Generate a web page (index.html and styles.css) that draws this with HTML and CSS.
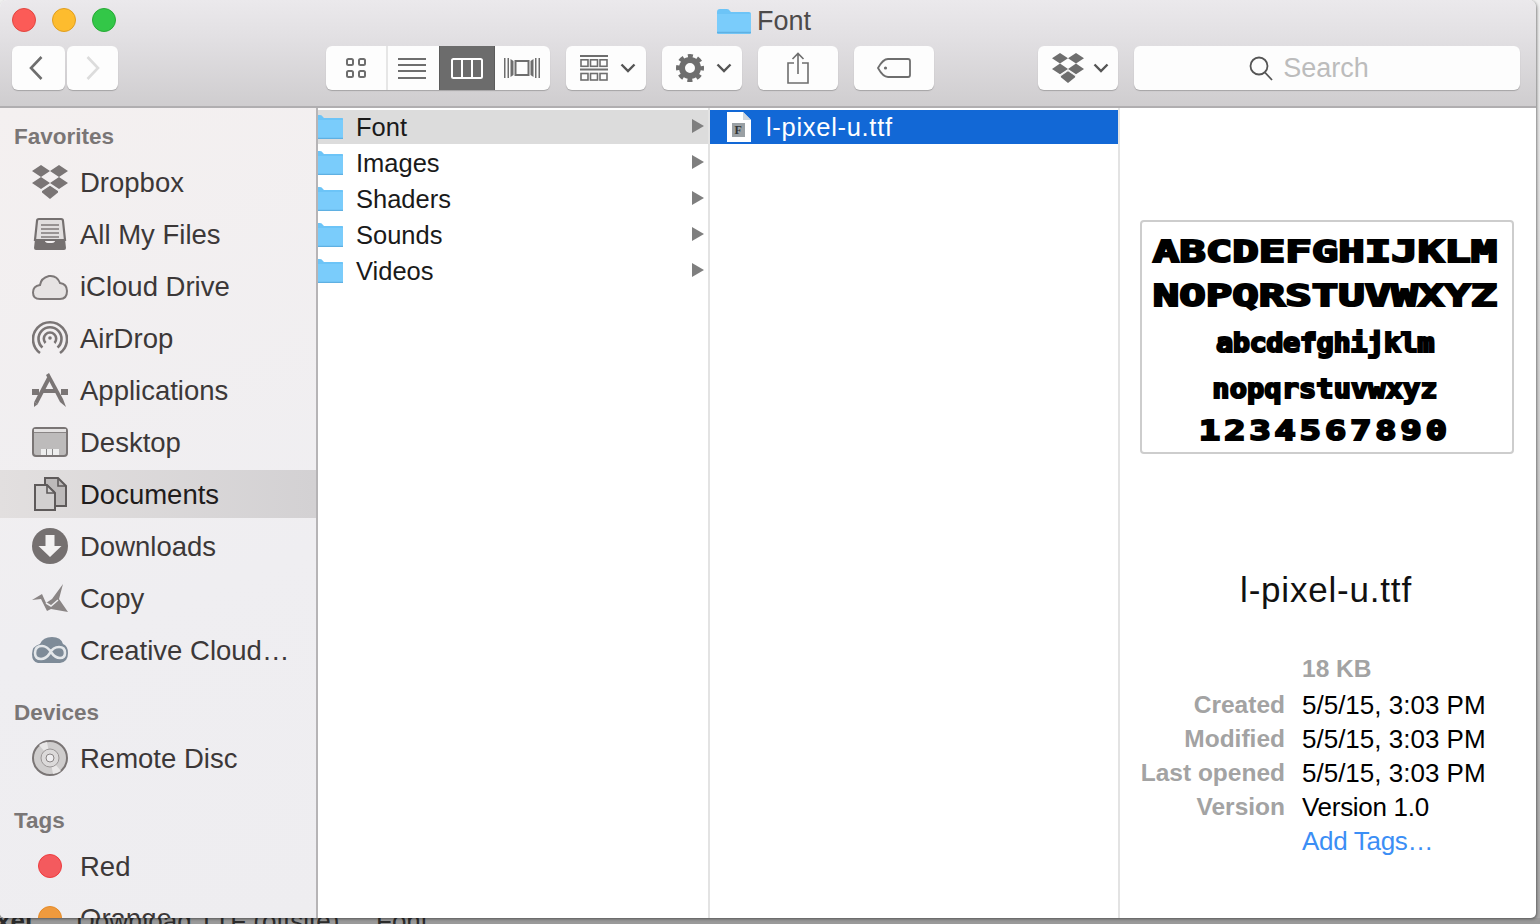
FILE: index.html
```html
<!doctype html>
<html lang="en">
<head>
    <meta charset="UTF-8">
    <title>Font</title>
    <link rel="stylesheet" href="styles.css">
</head>
<body>
    <svg class="defs" width="0" height="0">
        <symbol id="folder" viewBox="0 0 34 25">
            <path d="M0 3q0-3 3-3h7q2 0 3 2l1 1h18q2 0 2 2v18q0 2-2 2H2q-2 0-2-2z" fill="#6cc4f7"/>
            <path d="M0 5h34v18q0 2-2 2H2q-2 0-2-2z" fill="#7accfb"/>
            <path d="M0 23.500h34" stroke="#5fb0e2" stroke-width="1.500"/>
        </symbol>
        <symbol id="dropbox" viewBox="0 0 36 34">
            <path d="M9 0l9 6-9 6-9-6zM27 0l9 6-9 6-9-6zM9 12l9 6-9 6-9-6zM27 12l9 6-9 6-9-6z"/>
            <path d="M18 20l8 5.500v2L18 34l-8-6.500v-2z"/>
            <path d="M9 26l9-6 9 6" fill="none" stroke="#eee" stroke-width="1.200"/>
        </symbol>
        <symbol id="chevron" viewBox="0 0 16 10">
            <path d="M1.500 1.500L8 8l6.500-6.500" fill="none" stroke="#555" stroke-width="2.400"/>
        </symbol>
        <symbol id="triangle" viewBox="0 0 12 14">
            <path d="M0 0l12 7-12 7z" fill="#7f7f7f"/>
        </symbol>
    </svg>

    <div class="window">
        <header class="titlebar">
            <div class="title-row">
                <div class="lights">
                    <span class="light red"></span>
                    <span class="light yellow"></span>
                    <span class="light green"></span>
                </div>
                <div class="title">
                    <svg class="title-folder"><use href="#folder"/></svg>
                    <span>Font</span>
                </div>
                <div></div>
            </div>
            <div class="toolbar">
                <div class="nav">
                    <button class="btn btn-back">
                        <svg width="16" height="26" viewBox="0 0 16 26"><path d="M13.500 2L3 13l10.500 11" fill="none" stroke="#6e6e6e" stroke-width="2.600"/></svg>
                    </button>
                    <button class="btn btn-fwd">
                        <svg width="16" height="26" viewBox="0 0 16 26"><path d="M2.500 2L13 13 2.500 24" fill="none" stroke="#dcdcdc" stroke-width="2.600"/></svg>
                    </button>
                </div>
                <div class="views">
                    <button class="view view-icons">
                        <svg width="22" height="20" viewBox="0 0 22 20" fill="none" stroke="#6e6e6e" stroke-width="2"><rect x="2" y="1" width="6" height="6" rx="1.500"/><rect x="14" y="1" width="6" height="6" rx="1.500"/><rect x="2" y="13" width="6" height="6" rx="1.500"/><rect x="14" y="13" width="6" height="6" rx="1.500"/></svg>
                    </button>
                    <button class="view view-list">
                        <svg width="28" height="21" viewBox="0 0 28 21" fill="#6e6e6e"><rect y="0" width="28" height="2"/><rect y="6" width="28" height="2"/><rect y="12" width="28" height="2"/><rect y="19" width="28" height="2"/></svg>
                    </button>
                    <button class="view view-columns">
                        <svg width="32" height="21" viewBox="0 0 32 21" fill="none" stroke="#fff" stroke-width="2"><rect x="1" y="1" width="30" height="19" rx="1.500"/><path d="M11 1v19M21 1v19"/></svg>
                    </button>
                    <button class="view view-flow">
                        <svg width="36" height="20" viewBox="0 0 36 20" fill="#6e6e6e"><rect x="0" y="0" width="1.500" height="20"/><rect x="3.500" y="0" width="1.500" height="20"/><path d="M6.500 1l3 2v14l-3 2z"/><rect x="11.500" y="3" width="13" height="14" fill="none" stroke="#6e6e6e" stroke-width="2"/><path d="M29.500 1l-3 2v14l3 2z"/><rect x="31" y="0" width="1.500" height="20"/><rect x="34.500" y="0" width="1.500" height="20"/></svg>
                    </button>
                </div>
                <button class="btn btn-menu">
                    <svg width="28" height="26" viewBox="0 0 28 26" fill="none" stroke="#6e6e6e" stroke-width="1.600"><path d="M0 1h28" stroke-width="2"/><rect x="1" y="4.800" width="7" height="6.500"/><rect x="10.500" y="4.800" width="7" height="6.500"/><rect x="20" y="4.800" width="7" height="6.500"/><path d="M0 14.500h28" stroke-width="2"/><rect x="1" y="18.500" width="7" height="6.500"/><rect x="10.500" y="18.500" width="7" height="6.500"/><rect x="20" y="18.500" width="7" height="6.500"/></svg>
                    <svg class="chev"><use href="#chevron"/></svg>
                </button>
                <button class="btn btn-menu">
                    <svg width="28" height="28" viewBox="0 0 28 28"><circle cx="14" cy="14" r="8" fill="none" stroke="#6e6e6e" stroke-width="6"/><circle cx="14" cy="14" r="12" fill="none" stroke="#6e6e6e" stroke-width="4" stroke-dasharray="5 4.425" stroke-dashoffset="2.500"/></svg>
                    <svg class="chev"><use href="#chevron"/></svg>
                </button>
                <button class="btn btn-wide">
                    <svg width="22" height="32" viewBox="0 0 22 32" fill="none" stroke="#6e6e6e" stroke-width="1.600"><path d="M7 11H1v20h20V11h-6M11 22V2M5.500 7L11 1.500 16.500 7"/></svg>
                </button>
                <button class="btn btn-wide">
                    <svg width="34" height="20" viewBox="0 0 34 20" fill="none" stroke="#6e6e6e" stroke-width="1.800"><path d="M11 1h20q2 0 2 2v14q0 2-2 2H11Q6 19 1 10 6 1 11 1z"/><circle cx="8.500" cy="10" r="1.600" fill="#6e6e6e" stroke="none"/></svg>
                </button>
                <button class="btn btn-menu btn-drop">
                    <svg class="drop-icon"><use href="#dropbox"/></svg>
                    <svg class="chev"><use href="#chevron"/></svg>
                </button>
                <div class="search">
                    <svg width="24" height="26" viewBox="0 0 24 26" fill="none" stroke="#555" stroke-width="1.800"><circle cx="10" cy="11" r="8.500"/><path d="M16 17.500l7 7.500"/></svg>
                    <span>Search</span>
                </div>
            </div>
        </header>

        <div class="panes">
            <aside class="sidebar">
                <h4>Favorites</h4>
                <ul>
                    <li>
                        <svg class="side-icon icon-gray" viewBox="0 0 36 34"><use href="#dropbox"/></svg>
                        <span>Dropbox</span>
                    </li>
                    <li>
                        <svg class="side-icon" viewBox="0 0 36 34"><path d="M7 2h22q2 0 2 2l2 19H3L5 4q0-2 2-2z" fill="#e2dfdf" stroke="#757070" stroke-width="2.200"/><path d="M9 8h18M9 12h18M9 16h18M9 20h18" stroke="#807b7b" stroke-width="1.600"/><path d="M3 22h9q1 4 4 4h4q3 0 4-4h9l1 9q0 2-2 2H4q-2 0-2-2z" fill="#757070"/></svg>
                        <span>All My Files</span>
                    </li>
                    <li>
                        <svg class="side-icon" viewBox="0 0 36 34"><path d="M8 30q-7 0-7-6.500Q1 17 8 16q1-7 9-9 8-1 11 7 7 1 7 8 0 8-7 8z" fill="#e6e3e3" stroke="#7d7878" stroke-width="2"/></svg>
                        <span>iCloud Drive</span>
                    </li>
                    <li>
                        <svg class="side-icon" viewBox="0 0 36 34" fill="none" stroke="#7a7575" stroke-width="2.600"><path d="M8 32A17 17 0 1 1 28 32"/><path d="M10.500 26.500A11.500 11.500 0 1 1 25.500 26.500"/><path d="M13.500 22A6.200 6.200 0 1 1 22.500 22"/><circle cx="18" cy="17" r="1.800" fill="#7a7575" stroke="none"/></svg>
                        <span>AirDrop</span>
                    </li>
                    <li>
                        <svg class="side-icon" viewBox="0 0 36 34"><path d="M0 16h7v6H0zM29 16h7v6h-7zM11 16h14v4H11z" fill="#7a7575"/><path d="M17 5L4 30" stroke="#7a7575" stroke-width="4" fill="none"/><path d="M2 29l4 2-4 3z" fill="#7a7575"/><path d="M14 2l3-2 14 26 3 8-6-5z" fill="#7a7575"/></svg>
                        <span>Applications</span>
                    </li>
                    <li>
                        <svg class="side-icon" viewBox="0 0 36 30"><rect x="1" y="1" width="34" height="28" rx="3" fill="#bdbbbb" stroke="#7a7575" stroke-width="2"/><path d="M2 5h32" stroke="#7a7575" stroke-width="1.500"/><path d="M2 2h32v3H2z" fill="#e4e2e2"/><rect x="9" y="22" width="18" height="6" fill="#eee"/><path d="M14.500 22v6M20.500 22v6" stroke="#888"/></svg>
                        <span>Desktop</span>
                    </li>
                    <li class="active">
                        <svg class="side-icon" viewBox="0 0 36 34"><path d="M13 1h13l8 8v20H22V15l-9-8z" fill="#bdbaba" stroke="#5e5a5a" stroke-width="2"/><path d="M26 1v8h8" fill="none" stroke="#5e5a5a" stroke-width="1.600"/><path d="M3 8h12l8 8v17H3z" fill="#d2d0d0" stroke="#5e5a5a" stroke-width="2"/><path d="M15 8v8h8" fill="none" stroke="#5e5a5a" stroke-width="1.600"/></svg>
                        <span>Documents</span>
                    </li>
                    <li>
                        <svg class="side-icon" viewBox="0 0 36 36"><circle cx="18" cy="18" r="18" fill="#757070"/><path d="M13.500 7h9v11h7L18 29 6.500 18h7z" fill="#f3f1f1"/></svg>
                        <span>Downloads</span>
                    </li>
                    <li>
                        <svg class="side-icon" viewBox="0 0 36 30"><path d="M0 17l10-6 4 9 6-4 11-15-4 15 9 13-17-3-4 2-6-12z" fill="#8a8585"/><path d="M14 20l5 3 7-6" fill="none" stroke="#efeef0" stroke-width="1.500"/></svg>
                        <span>Copy</span>
                    </li>
                    <li>
                        <svg class="side-icon" viewBox="0 0 36 28"><path d="M6 27q-6-1-6-9t8-10Q11 1 20 1q9 0 11 7 5 2 5 9 0 9-8 10z" fill="#7e8b98"/><path d="M9 23q-6 0-6-6 0-7 7-7 5 0 9 6 4 6 9 6 5 0 5-5 0-6-6-6-6 0-9 6-4 6-9 6z" fill="none" stroke="#e4e7ea" stroke-width="2.600"/></svg>
                        <span>Creative Cloud…</span>
                    </li>
                </ul>
                <h4 class="next">Devices</h4>
                <ul>
                    <li>
                        <svg class="side-icon" viewBox="0 0 36 36"><circle cx="18" cy="18" r="17" fill="#cfcdcd" stroke="#7a7575" stroke-width="2"/><path d="M18 18L7 5a17 17 0 0 1 8-3zM18 18l11 13a17 17 0 0 1-8 3z" fill="#e9e7e7"/><circle cx="18" cy="18" r="9" fill="#dcdada" stroke="#9a9696"/><circle cx="18" cy="18" r="4" fill="#efeef0" stroke="#8a8585"/></svg>
                        <span>Remote Disc</span>
                    </li>
                </ul>
                <h4 class="next">Tags</h4>
                <ul>
                    <li>
                        <span class="side-icon tag-box"><span class="tag tag-red"></span></span>
                        <span class="label">Red</span>
                    </li>
                    <li>
                        <span class="side-icon tag-box"><span class="tag tag-orange"></span></span>
                        <span class="label">Orange</span>
                    </li>
                </ul>
            </aside>

            <section class="column col-folders">
                <div class="entry selected">
                    <svg class="entry-folder" viewBox="8 0 25 24"><use href="#folder" width="34" height="25"/></svg>
                    <span class="entry-name">Font</span>
                    <svg class="arrow"><use href="#triangle"/></svg>
                </div>
                <div class="entry">
                    <svg class="entry-folder" viewBox="8 0 25 24"><use href="#folder" width="34" height="25"/></svg>
                    <span class="entry-name">Images</span>
                    <svg class="arrow"><use href="#triangle"/></svg>
                </div>
                <div class="entry">
                    <svg class="entry-folder" viewBox="8 0 25 24"><use href="#folder" width="34" height="25"/></svg>
                    <span class="entry-name">Shaders</span>
                    <svg class="arrow"><use href="#triangle"/></svg>
                </div>
                <div class="entry">
                    <svg class="entry-folder" viewBox="8 0 25 24"><use href="#folder" width="34" height="25"/></svg>
                    <span class="entry-name">Sounds</span>
                    <svg class="arrow"><use href="#triangle"/></svg>
                </div>
                <div class="entry">
                    <svg class="entry-folder" viewBox="8 0 25 24"><use href="#folder" width="34" height="25"/></svg>
                    <span class="entry-name">Videos</span>
                    <svg class="arrow"><use href="#triangle"/></svg>
                </div>
            </section>

            <section class="column col-files">
                <div class="entry file focused">
                    <svg class="file-icon" viewBox="0 0 24 30"><path d="M0 0h16l8 8v22H0z" fill="#fff"/><path d="M16 0v8h8z" fill="#cfd6de"/><rect x="5" y="11" width="13" height="14" fill="#9aa0a4"/><text x="7.500" y="22" class="file-f">F</text></svg>
                    <span class="entry-name">l-pixel-u.ttf</span>
                </div>
            </section>

            <section class="preview">
                <div class="specimen">
                    <div class="glyphs caps">ABCDEFGHIJKLM</div>
                    <div class="glyphs caps">NOPQRSTUVWXYZ</div>
                    <div class="glyphs lower lower-a">abcdefghijklm</div>
                    <div class="glyphs lower lower-b">nopqrstuvwxyz</div>
                    <div class="glyphs digits">1234567890</div>
                </div>
                <div class="file-name">l-pixel-u.ttf</div>
                <dl class="meta">
                    <dt></dt><dd class="size">18 KB</dd>
                    <dt>Created</dt><dd>5/5/15, 3:03 PM</dd>
                    <dt>Modified</dt><dd>5/5/15, 3:03 PM</dd>
                    <dt>Last opened</dt><dd>5/5/15, 3:03 PM</dd>
                    <dt>Version</dt><dd class="tight">Version 1.0</dd>
                    <dt></dt><dd class="add-tags tight">Add Tags…</dd>
                </dl>
            </section>
        </div>
    </div>

    <div class="under">
        <span class="under-a">xel</span>
        <span class="under-b">Download TTF (offsite)</span>
        <span class="under-c">Font</span>
    </div>
</body>
</html>
```

FILE: styles.css
```css
*{padding: 0; margin: 0; box-sizing: border-box;}
html, body{height: 100%; overflow: hidden;}
body{width: 1540px; background: linear-gradient(#f0f0f0, #c8c8c8 60%, #a8a8a8); font-family: "Liberation Sans", Arial, sans-serif; color: #000;}
.defs{display: block; height: 0;}
button{border: 0; font: inherit; background: none;}

.window{position: relative; z-index: 1; width: 1536px; height: 918px; display: flex; flex-direction: column; overflow: hidden; border-radius: 7px 7px 5px 5px; background: #fff; box-shadow: 1px 1px 3px rgba(0,0,0,.45);}

/* title bar */
.titlebar{height: 108px; flex: none; background: linear-gradient(#ebe9ec, #e2e0e3 35%, #cfcdcf); border-bottom: 2px solid #b0aeb0;}
.title-row{height: 46px; display: grid; grid-template-columns: 1fr auto 1fr; align-items: start;}
.lights{display: flex; gap: 16px; padding: 8px 0 0 12px;}
.light{width: 24px; height: 24px; border-radius: 50%;}
.red{background: #fc5b57; border: 1px solid #e2463f;}
.yellow{background: #fdbc2e; border: 1px solid #e09e1f;}
.green{background: #33c748; border: 1px solid #27aa35;}
.title{display: flex; align-items: center; gap: 6px; padding: 7px 8px 0 0; font-size: 27px; line-height: 28px; color: #4d4a4a;}
.title-folder{width: 34px; height: 25px;}

.toolbar{display: flex; align-items: center; padding-left: 12px;}
.btn, .views, .search{height: 44px; background: #fdfdfd; border-radius: 6px; box-shadow: 0 1px 1px rgba(0,0,0,.22);}
.btn{display: flex; align-items: center; justify-content: center;}
.nav{display: flex; gap: 2px;}
.btn-back{width: 53px; padding-right: 6px;}
.btn-fwd{width: 51px;}
.views{display: flex; margin-left: 208px; overflow: hidden;}
.view{height: 44px; display: flex; align-items: center; justify-content: center;}
.view-icons{width: 60px;}
.view-list{width: 53px; border-left: 2px solid #e6e6e6; padding-right: 3px;}
.view-columns{width: 56px; background: #6c6c6c; border-left: 1px solid #5c5c5c; border-right: 1px solid #5c5c5c;}
.view-flow{width: 55px; padding-right: 2px;}
.btn-menu{width: 80px; margin-left: 16px; gap: 12px; padding-left: 4px;}
.btn-wide{width: 80px; margin-left: 16px;}
.btn-drop{margin-left: 104px; gap: 9px;}
.chev{width: 16px; height: 10px;}
.drop-icon{width: 32px; height: 32px; fill: #6e6e6e;}
.search{width: 386px; margin-left: 16px; display: flex; align-items: center; justify-content: center; gap: 10px; font-size: 27px; color: #bcbcbc; padding-right: 36px;}

/* panes */
.panes{flex: 1; display: flex; min-height: 0;}
.sidebar{width: 318px; flex: none; overflow: hidden; border-right: 2px solid #b6b4b6; background: linear-gradient(160deg, #f4f0f0, #efeef1 60%, #eeedf0); padding-top: 14px;}
.sidebar h4{height: 28px; line-height: 29px; padding-left: 14px; font-size: 22.500px; font-weight: bold; color: #7a7676; margin-bottom: 8px;}
.sidebar h4.next{margin-top: 24px; margin-bottom: 8px;}
.sidebar ul{list-style: none; display: flex; flex-direction: column; gap: 4px;}
.sidebar li{height: 48px; display: flex; align-items: center; gap: 12px; padding-left: 32px; font-size: 27.500px; color: #3c3838;}
.sidebar li > span:last-child{padding-top: 2px;}
.sidebar li.active{background: linear-gradient(90deg, #e2dfdf, #d3d1d3); color: #1f1c1c;}
.side-icon{width: 36px; height: 36px; flex: none;}
.icon-gray{fill: #7a7575;}
.tag-box{display: flex; align-items: center; justify-content: center;}
.tag{width: 24px; height: 24px; border-radius: 50%;}
.tag-red{background: #f45a5e; border: 1px solid #ee3b3e;}
.tag-orange{background: #ee9a3e; border: 1px solid #e58a26;}
.label{padding-top: 3px;}

.column{flex: none; padding-top: 2px; display: flex; flex-direction: column; gap: 2px; border-right: 2px solid #e3e3e3;}
.col-folders{width: 392px;}
.col-files{width: 410px;}
.entry{height: 34px; display: flex; align-items: center; font-size: 25.500px; color: #1a1a1a;}
.entry.selected{background: #dcdcdc;}
.entry.focused{background: #1268d6; color: #fff;}
.entry-folder{width: 25px; height: 24px; flex: none; margin-right: 13px;}
.entry-name{flex: 1;}
.arrow{width: 12px; height: 14px; margin: -3px 4px 0 0;}
.file{padding-left: 17px;}
.file .entry-name{letter-spacing: .7px;}
.file-icon{width: 24px; height: 30px; margin-right: 15px;}
.file-f{font: bold 12px "Liberation Serif", serif; fill: #333;}

/* preview */
.preview{flex: 1; display: flex; flex-direction: column; padding-top: 112px;}
.specimen{width: 374px; height: 234px; margin-left: 20px; padding: 3px 4px 0 0; border: 2px solid #cdcdcd; border-radius: 4px; text-align: center; overflow: hidden; color: #000; font-family: "DejaVu Sans Mono", monospace; font-weight: bold; -webkit-text-stroke: 2px #000;}
.glyphs{white-space: nowrap;}
.caps{height: 44px; line-height: 52px; font-size: 31px; transform: scaleX(1.420);}
.lower{height: 46px; line-height: 46px; font-size: 26px; transform: scaleX(1.100);}
.lower-a{margin-top: 7px; letter-spacing: -.4px;}
.lower-b{letter-spacing: .1px;}
.digits{height: 42px; line-height: 42px; margin-top: -2px; font-size: 26px; letter-spacing: 3px; transform: scaleX(1.350);}
.file-name{margin-top: 114px; height: 44px; line-height: 44px; text-align: center; font-size: 35px; letter-spacing: .8px; padding-right: 4px; color: #111;}
.meta{margin-top: 40px; display: grid; grid-template-columns: 165px 1fr; grid-template-rows: 36px repeat(5, 34px); column-gap: 17px; line-height: 34px; font-size: 26px;}
.meta dt{text-align: right; font-weight: bold; font-size: 24.500px; color: #a3a3a3;}
.meta dd.size{font-weight: bold; font-size: 24.500px; color: #a3a3a3;}
.tight{letter-spacing: -.3px;}
.add-tags{color: #3b8ef5;}

.under{height: 6px; overflow: hidden; background: #9a9a9a; color: #2c2c2c; font-size: 26px; line-height: 20px; white-space: nowrap; display: flex;}
.under span{display: block; margin-top: -7px; height: 30px;}
.under-a{width: 80px; font-weight: bold; margin-left: -4px;}
.under-b{width: 300px;}
```
